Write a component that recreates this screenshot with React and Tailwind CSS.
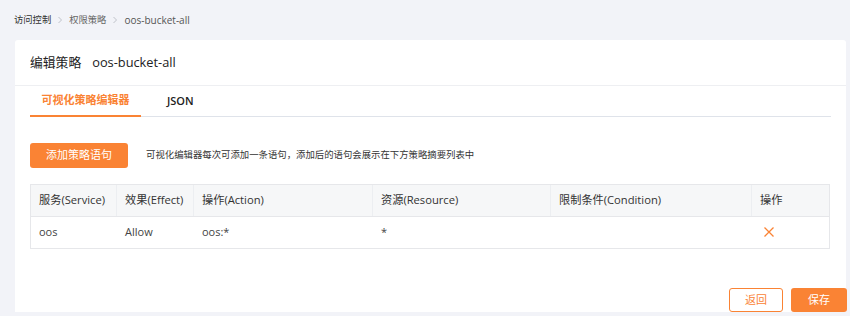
import React from 'react';

const columns = [
  { key: 'service', label: '服务(Service)', w: 'w-[86px]' },
  { key: 'effect', label: '效果(Effect)', w: 'w-[77px]' },
  { key: 'action', label: '操作(Action)', w: 'w-[179px]' },
  { key: 'resource', label: '资源(Resource)', w: 'w-[178px]' },
  { key: 'condition', label: '限制条件(Condition)', w: 'w-[201px]' },
  { key: 'op', label: '操作', w: 'flex-1' },
];

const rows = [{ service: 'oos', effect: 'Allow', action: 'oos:*', resource: '*', condition: '' }];

function Chevron() {
  return (
    <svg width="6" height="8" viewBox="0 0 6 8" className="mx-[6px]">
      <path d="M1.5 1 L4.5 4 L1.5 7" fill="none" stroke="#c0c3ca" strokeWidth="1" />
    </svg>
  );
}

export default function App() {
  return (
    <div
      className="w-[850px] h-[316px] bg-[#f2f3f8] overflow-hidden text-[#333]"
      style={{ fontFamily: '"Open Sans", "Noto Sans CJK SC", sans-serif' }}
    >
      {/* breadcrumb */}
      <div className="h-[40px] flex items-center pl-[14px] text-[9.3px]">
        <span className="text-[#333]">访问控制</span>
        <Chevron />
        <span className="text-[#666]">权限策略</span>
        <Chevron />
        <span className="text-[#555] text-[10px]">oos-bucket-all</span>
      </div>

      <div className="ml-[15px] w-[831px] h-[272px] bg-white rounded-t-[3px] flex flex-col">
        <div className="h-[46px] border-b border-[#eeeff2] flex items-center px-[15px] text-[12.8px] text-[#222]">
          <span>编辑策略</span>
          <span className="ml-[11px]">oos-bucket-all</span>
        </div>

        <div className="mx-[15px] h-[31px] border-b border-[#dfe3ea] flex items-stretch text-[11px] font-semibold">
          <div className="w-[111px] flex items-center justify-center text-[#fa8334] border-b-2 border-[#fa8334] -mb-px">
            可视化策略编辑器
          </div>
          <div className="ml-[26px] flex items-center text-[#222]">JSON</div>
        </div>

        <div className="px-[15px] pt-[26px]">
          <div className="flex items-center">
            <button className="w-[98px] h-[25px] rounded-[3px] bg-[#fa8334] text-white text-[11px]">
              添加策略语句
            </button>
            <span className="ml-[18px] text-[9.4px] text-[#333]">
              可视化编辑器每次可添加一条语句，添加后的语句会展示在下方策略摘要列表中
            </span>
          </div>

          <div className="mt-[16px] w-[800px] border border-[#e6e7ea]">
            <div className="flex h-[32px] bg-[#f6f7f8] border-b border-[#e6e7ea] text-[11.2px] text-[#333]">
              {columns.map((c, i) => (
                <div
                  key={c.key}
                  className={`${c.w} flex items-center pl-[8px] ${i < columns.length - 1 ? 'border-r border-[#eceef1]' : ''}`}
                >
                  {c.label}
                </div>
              ))}
            </div>
            {rows.map((r, ri) => (
              <div key={ri} className="flex h-[31px] text-[11px] text-[#444]">
                <div className="w-[86px] flex items-center pl-[8px]">{r.service}</div>
                <div className="w-[77px] flex items-center pl-[8px]">{r.effect}</div>
                <div className="w-[179px] flex items-center pl-[8px]">{r.action}</div>
                <div className="w-[178px] flex items-center pl-[8px]">{r.resource}</div>
                <div className="w-[201px] flex items-center pl-[8px]">{r.condition}</div>
                <div className="flex-1 flex items-center pl-[12px] pb-[2px]">
                  <svg width="10" height="10" viewBox="0 0 10 10">
                    <path d="M0.5 0.5 L9.5 9.5 M9.5 0.5 L0.5 9.5" stroke="#fa8334" strokeWidth="1.3" />
                  </svg>
                </div>
              </div>
            ))}
          </div>
        </div>

        <div className="mt-auto flex justify-end gap-[8px] -mr-[1px]">
          <button className="w-[54px] h-[24px] rounded-[3px] border border-[#fa8334] bg-white text-[#fa8334] text-[11px]">
            返回
          </button>
          <button className="w-[56px] h-[24px] rounded-[3px] bg-[#fa8334] text-white text-[11px]">
            保存
          </button>
        </div>
      </div>
    </div>
  );
}
